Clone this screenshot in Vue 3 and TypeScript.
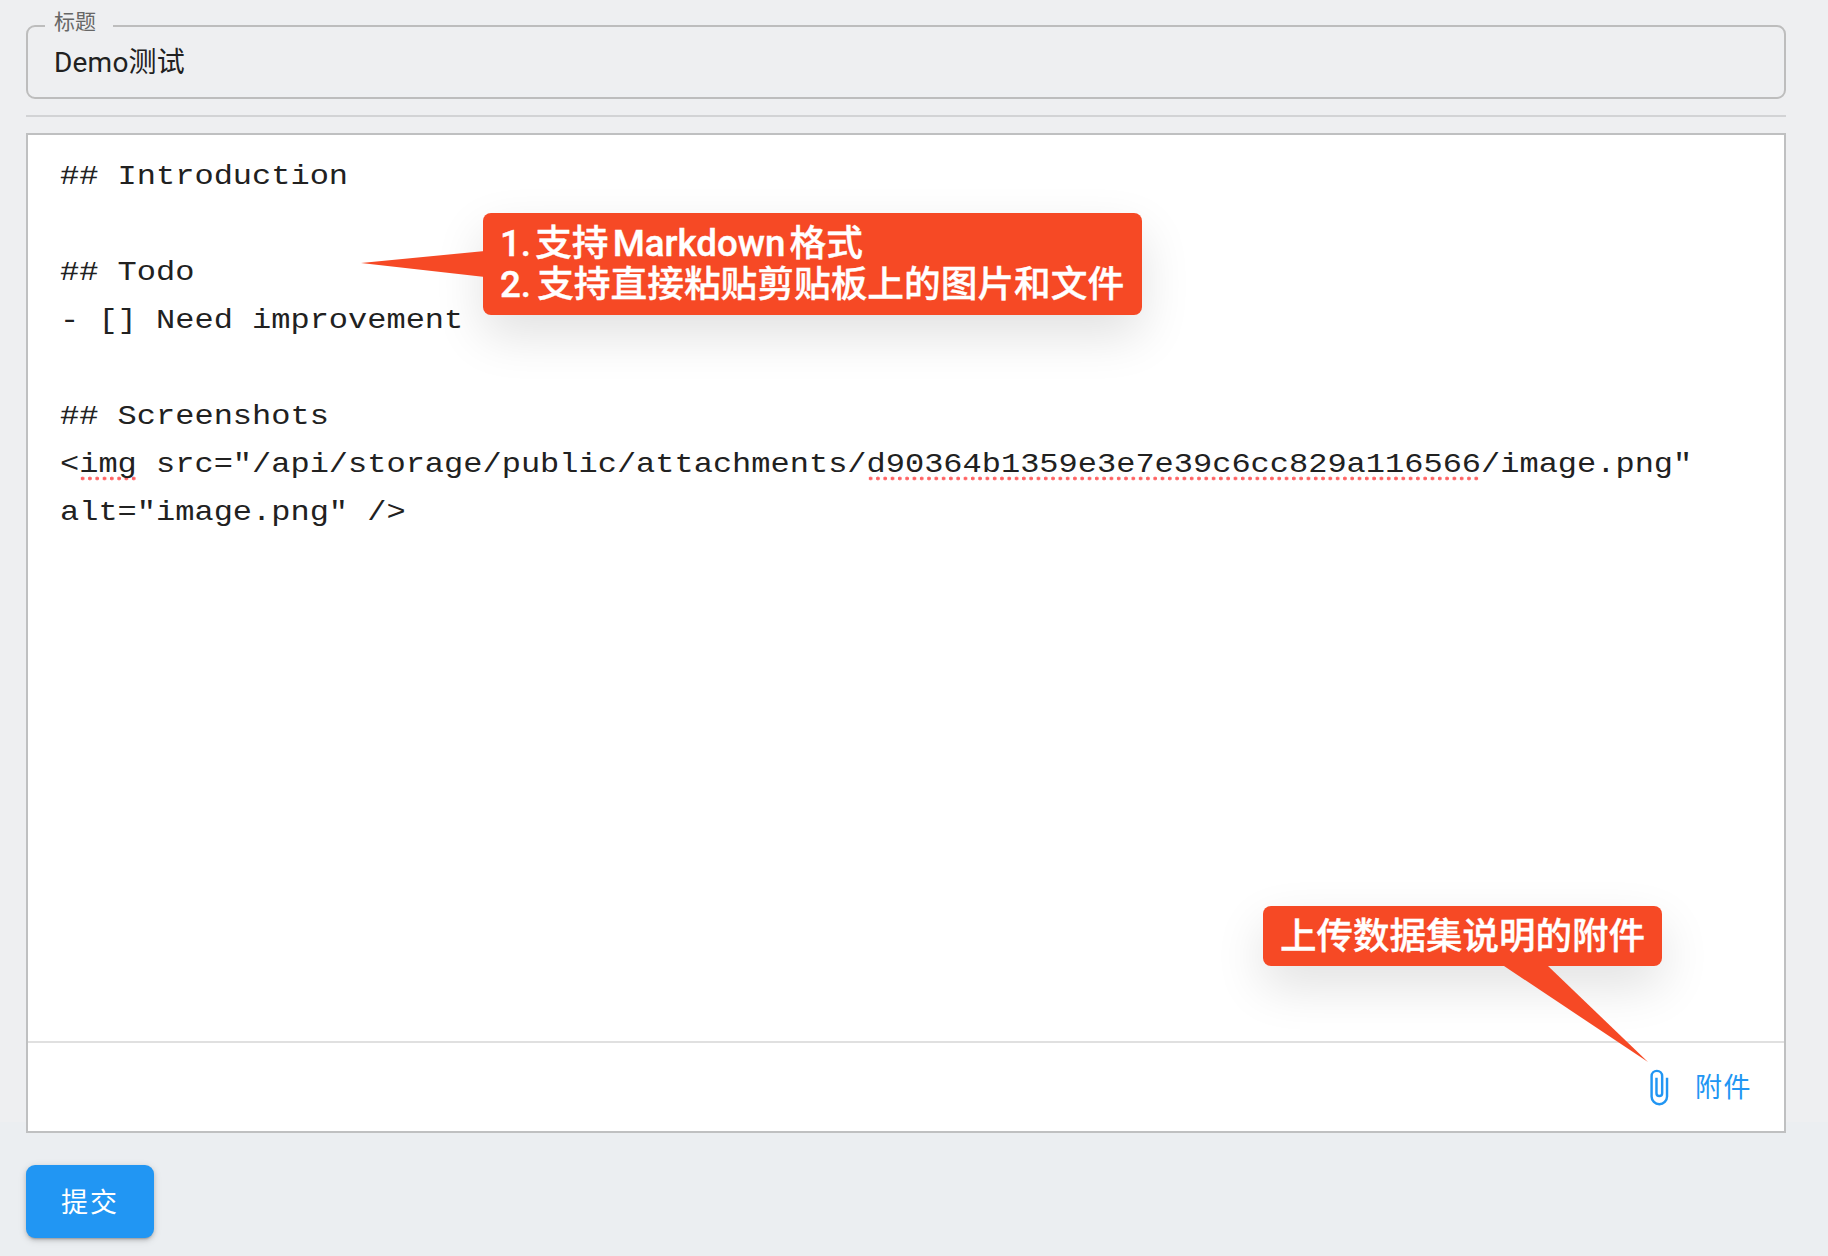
<script setup lang="ts">
interface Segment { text: string; flagged?: boolean }
const lines: Segment[][] = [
  [{ text: '## Introduction' }],
  [{ text: '' }],
  [{ text: '## Todo' }],
  [{ text: '- [] Need improvement' }],
  [{ text: '' }],
  [{ text: '## Screenshots' }],
  [
    { text: '<' },
    { text: 'img', flagged: true },
    { text: ' src="/api/storage/public/attachments/' },
    { text: 'd90364b1359e3e7e39c6cc829a116566', flagged: true },
    { text: '/image.png"' },
  ],
  [{ text: 'alt="image.png" />' }],
]
</script>

<template>
  <main class="page">
    <fieldset class="title-field">
      <legend>标题</legend>
      <div class="title-value">Demo测试</div>
    </fieldset>
    <hr class="divider" />
    <section class="editor">
      <div class="code">
        <div v-for="(line, i) in lines" :key="i" class="line">
          <span v-for="(seg, j) in line" :key="j" :class="{ flagged: seg.flagged }">{{ seg.text }}</span>
        </div>
      </div>
      <div class="editor-footer">
        <button class="attach" type="button">
          <svg class="clip" viewBox="0 0 24 24" aria-hidden="true">
            <path d="M16.5,6V17.5A4,4 0 0,1 12.5,21.5A4,4 0 0,1 8.5,17.5V5A2.5,2.5 0 0,1 11,2.5A2.5,2.5 0 0,1 13.5,5V15.5A1,1 0 0,1 12.5,16.5A1,1 0 0,1 11.5,15.5V6H10V15.5A2.5,2.5 0 0,0 12.5,18A2.5,2.5 0 0,0 15,15.5V5A4,4 0 0,0 11,1A4,4 0 0,0 7,5V17.5A5.5,5.5 0 0,0 12.5,23A5.5,5.5 0 0,0 18,17.5V6H16.5Z" />
          </svg>
          <span class="attach-label">附件</span>
        </button>
      </div>
    </section>
    <button class="submit" type="button"><span>提交</span></button>

    <div class="note note-a">
      <svg class="tail tail-a" viewBox="0 0 124 28"><polygon points="0,12 124,0 124,26" /></svg>
      <div class="note-body note-body-a">
        <div class="tight">1. 支持 Markdown 格式</div>
        <div>2. 支持直接粘贴剪贴板上的图片和文件</div>
      </div>
    </div>
    <div class="note note-b">
      <svg class="tail tail-b" viewBox="0 0 146 96"><polygon points="2,0 46,0 146,96" /></svg>
      <div class="note-body note-body-b">上传数据集说明的附件</div>
    </div>
  </main>
</template>

<style>
html, body { margin: 0; background: #ebeef1; }
</style>

<style scoped>
.page {
  position: relative;
  box-sizing: border-box;
  height: 1256px;
  padding: 0 42px 0 26px;
  display: flex;
  flex-direction: column;
  align-items: stretch;
  background: linear-gradient(#eeeff1 0, #eeeff1 1122px, #ebeef1 1122px);
  font-family: Roboto, "Noto Sans CJK SC", sans-serif;
  color: #212121;
}
.title-field {
  box-sizing: border-box;
  margin: 8px 0 0;
  padding: 0 26px;
  height: 91px;
  min-width: 0;
  border: 2px solid #bdbdbd;
  border-radius: 9px;
}
.title-field legend {
  margin-left: -9px;
  padding: 0 17px 8px 9px;
  font-size: 21px;
  line-height: 28px;
  color: #666;
}
.title-value {
  font-size: 28px;
  line-height: 36px;
  letter-spacing: .2px;
  padding-top: 1px;
}
.divider {
  margin: 16px 0;
  height: 2px;
  border: 0;
  background: #d2d3d5;
}
.editor {
  box-sizing: border-box;
  height: 1000px;
  display: flex;
  flex-direction: column;
  background: #fff;
  border: 2px solid #bfc0c1;
}
.code {
  flex: 1;
  padding: 18px 32px 0;
  font-family: "Liberation Mono", monospace;
  font-size: 32px;
  line-height: 48px;
  color: #212121;
}
.line {
  height: 48px;
  white-space: pre;
  transform: scaleY(.87);
  transform-origin: 50% 50%;
}
.flagged {
  padding-bottom: 0;
  background-image: radial-gradient(ellipse 1.9px 2.2px at 3.6px 2.5px, #ff6060 85%, transparent 100%);
  background-size: 7.3px 5px;
  background-position: 0 100%;
  background-repeat: repeat-x;
}
.editor-footer {
  height: 90px;
  box-sizing: border-box;
  border-top: 2px solid #e0e0e0;
  display: flex;
  justify-content: flex-end;
  align-items: center;
  padding: 0 32px 0 0;
}
.attach {
  display: flex;
  align-items: center;
  gap: 17px;
  padding: 0;
  border: 0;
  background: none;
  color: #2196f3;
  font: 27px Roboto, "Noto Sans CJK SC", sans-serif;
  letter-spacing: 1.5px;
}
.attach-label { margin-top: -3px; }
.clip { width: 39px; height: 39px; fill: #2196f3; }
.submit {
  margin-top: 32px;
  width: 128px;
  height: 73px;
  padding: 0 0 2px;
  border: 0;
  border-radius: 9px;
  background: #2196f3;
  color: #fff;
  font: 27px Roboto, "Noto Sans CJK SC", sans-serif;
  letter-spacing: 2px;
  box-shadow: 0 3px 2px -2px rgba(0,0,0,.2), 0 2px 4px 0 rgba(0,0,0,.14), 0 2px 8px 0 rgba(0,0,0,.12);
}
.note { position: absolute; }
.note-body {
  position: relative;
  background: #f64925;
  color: #fff;
  font-weight: 500;
  -webkit-text-stroke: .4px #fff;
  border-radius: 8px;
  box-shadow: 0 20px 50px rgba(0,0,0,.12);
  font-family: Roboto, "Noto Sans CJK SC", sans-serif;
}
.note-a { left: 483px; top: 213px; width: 659px; height: 102px; }
.note-body-a {
  box-sizing: border-box;
  height: 102px;
  padding: 10px 0 0 17px;
  font-size: 36.7px;
  line-height: 41px;
  word-spacing: -3px;
  white-space: nowrap;
}
.tight { word-spacing: -5px; }
.note-b { left: 1263px; top: 906px; width: 399px; height: 60px; }
.note-body-b {
  box-sizing: border-box;
  height: 60px;
  padding: 9px 0 0 17px;
  font-size: 36.5px;
  line-height: 44px;
  white-space: nowrap;
}
.tail { position: absolute; fill: #f64925; z-index: 1; display: block; }
.tail-a { left: -122px; top: 38px; width: 124px; height: 28px; }
.tail-b { left: 239px; top: 60px; width: 146px; height: 96px; }
</style>
